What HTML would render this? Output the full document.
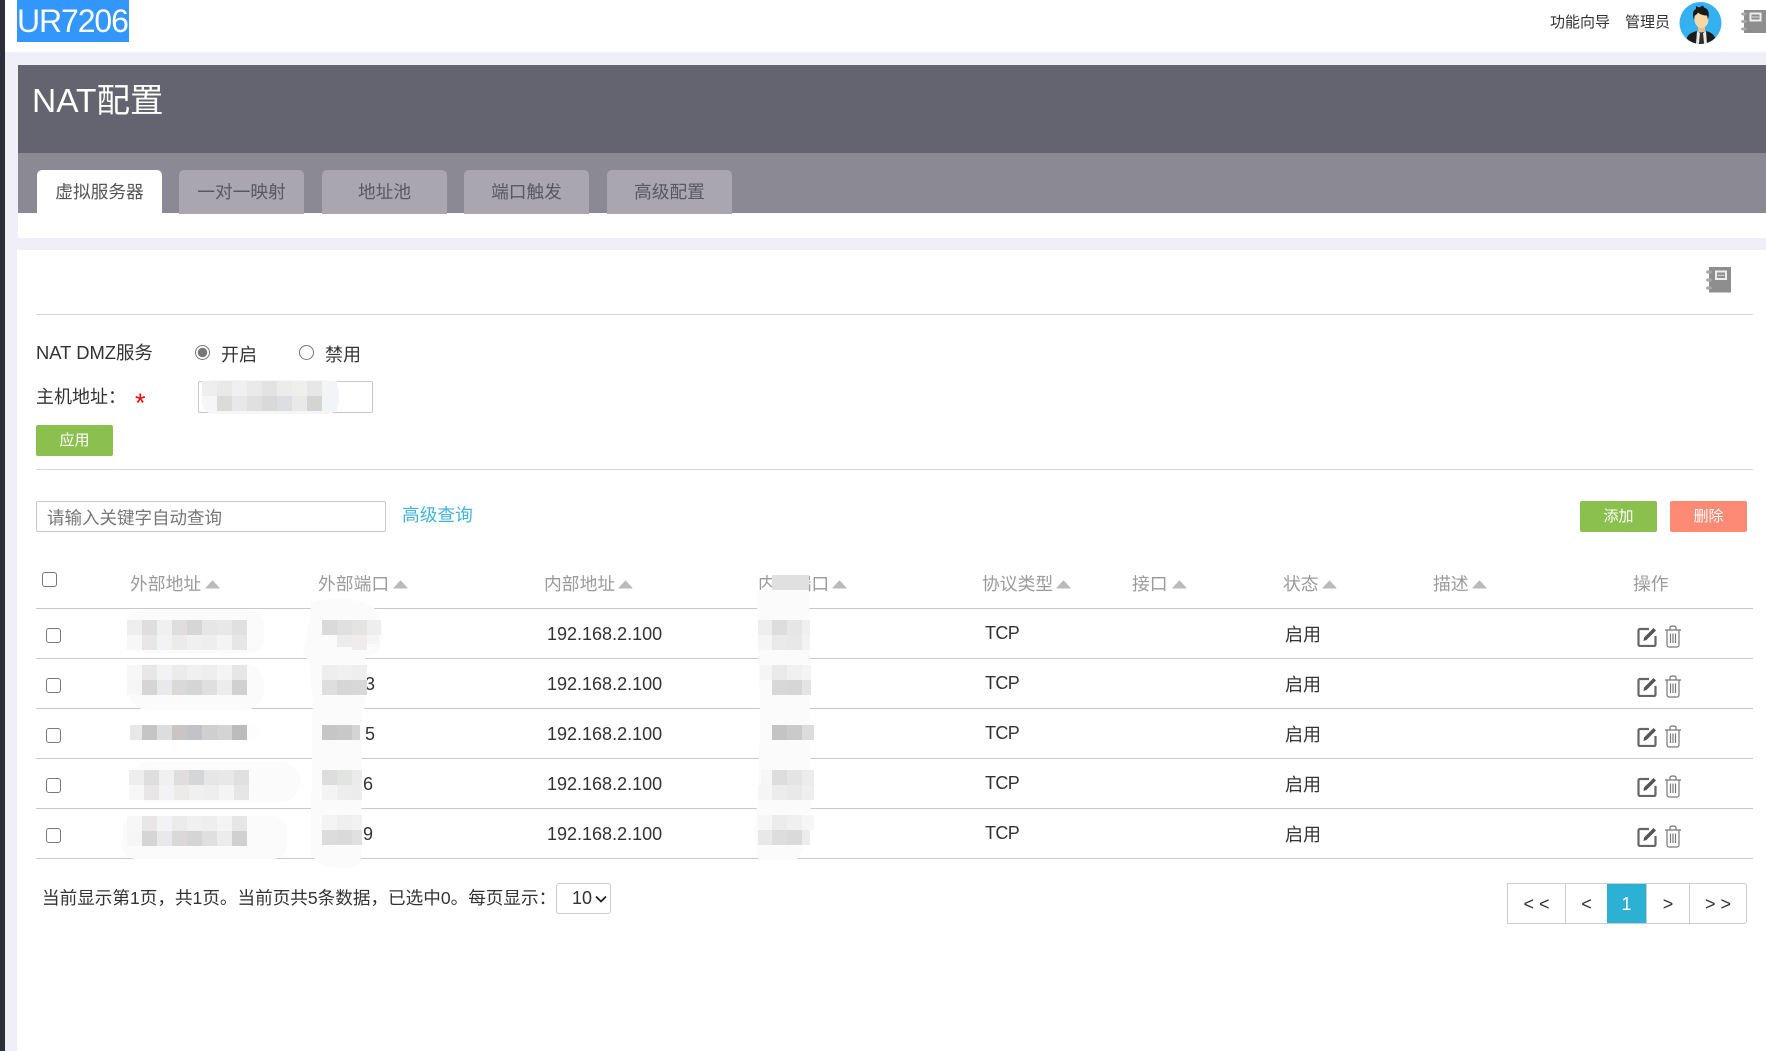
<!DOCTYPE html>
<html lang="zh-CN">
<head>
<meta charset="utf-8">
<title>NAT配置</title>
<style>
html,body{margin:0;padding:0;width:1766px;height:1051px;overflow:hidden;background:#eeeff7;}
body{position:relative;font-family:"Liberation Sans","Noto Sans CJK SC",sans-serif;color:#333;}
.a{position:absolute;}
.t{position:absolute;line-height:24px;height:24px;white-space:nowrap;font-size:18px;}
.line{position:absolute;left:36px;width:1717px;height:1px;background:#d8d8d8;}
.tab{position:absolute;top:170px;width:125px;height:44px;background:#a9a6af;border-radius:5px 5px 0 0;text-align:center;line-height:44px;font-size:17.700px;color:#585860;}
.btn{position:absolute;height:31px;width:77px;border-radius:2px;color:#fff;font-size:15px;line-height:32px;text-align:center;}
.green{background:#8bc04f;}
.red{background:#fd8a75;}
input.cb{position:absolute;appearance:none;-webkit-appearance:none;margin:0;width:15px;height:15px;border:1px solid #777;border-radius:3px;background:#fff;box-sizing:border-box;}
input.rd{position:absolute;appearance:none;-webkit-appearance:none;margin:0;width:15px;height:15px;border:1px solid #777;border-radius:50%;background:#fff;box-sizing:border-box;top:345px;}
input.rd:checked{background:radial-gradient(circle,#777 0,#777 4.4px,#fff 5px);}
.th{position:absolute;top:572px;line-height:24px;font-size:17.800px;color:#9b9b9b;white-space:nowrap;}
.ar{position:absolute;top:580px;width:15px;height:9px;}
.row{position:absolute;left:36px;width:1717px;height:49px;border-bottom:1px solid #c9c9c9;}
.row .t{top:13px;}
.row .tc{letter-spacing:-.6px;top:12px;}
.row .cb{left:10px;top:19px;}
.row .st{top:14px;}
.row svg{position:absolute;}
.pg{position:absolute;top:0;height:39px;line-height:40px;text-align:center;font-size:18px;color:#333;border-right:1px solid #ccc;box-sizing:content-box;}
</style>
</head>
<body>
<div class="a" style="left:0;top:0;width:5px;height:1051px;background:#2c2f39;"></div>

<!-- top bar -->
<div class="a" style="left:5px;top:0;width:1761px;height:52px;background:#fff;"></div>
<div class="a" style="left:17px;top:0;width:112px;height:42px;background:#3296fb;color:#fff;font-size:32px;line-height:42px;letter-spacing:-1.1px;white-space:nowrap;overflow:hidden;">UR7206</div>
<div class="t" style="left:1550px;top:11px;font-size:15px;color:#333;">功能向导</div>
<div class="t" style="left:1625px;top:11px;font-size:15px;color:#333;">管理员</div>
<svg class="a" style="left:1679px;top:2px;" width="43" height="42" viewBox="0 0 43 42">
  <defs><clipPath id="c"><circle cx="21.5" cy="21" r="21"/></clipPath></defs>
  <circle cx="21.5" cy="21" r="21" fill="#35b1f2"/>
  <g clip-path="url(#c)">
    <path d="M7 42c0-8 3-11 11-13l4 2 5-2c7 2 10 5 10 13z" fill="#1d1c1c"/>
    <path d="M18 29l-1 13h3l1-11zM27 29l1 13h-3l-1-11z" fill="#eee9dc"/>
    <path d="M21 31h3l-.5 11h-2z" fill="#333"/>
    <rect x="19" y="23" width="7" height="7" fill="#e7c08f"/>
    <ellipse cx="22.500" cy="17.500" rx="7" ry="8.500" fill="#f7d7a4"/>
    <path d="M15 18c-2-6-1-10 2-11l0-3 3 1.500 4-2 1 2c4 1 6 5 4 12l-1-4c-3 0-7-1-9-3-1 2-3 3-3.500 3z" fill="#1a1a1a"/>
  </g>
</svg>
<svg class="a" style="left:1741px;top:10px;" width="25" height="23" viewBox="0 0 25 23">
  <rect x="3" y="0" width="22" height="23" fill="#8e8e8e"/>
  <rect x="9.500" y="3.500" width="10" height="7" fill="#8e8e8e" stroke="#eee" stroke-width="2"/>
  <path d="M11 7h7" stroke="#ddd"/>
  <g fill="#a8a8a8"><ellipse cx="3" cy="4" rx="3" ry="1.600"/><ellipse cx="3" cy="11.500" rx="3" ry="1.600"/><ellipse cx="3" cy="19" rx="3" ry="1.600"/></g>
</svg>

<!-- title panel -->
<div class="a" style="left:18px;top:65px;width:1748px;height:88px;background:#63646f;"></div>
<div class="a" style="left:32px;top:82px;color:#fff;font-size:33.500px;line-height:40px;white-space:nowrap;">NAT配置</div>
<div class="a" style="left:18px;top:153px;width:1748px;height:60px;background:#8b8994;"></div>
<div class="a" style="left:18px;top:213px;width:1748px;height:25px;background:#fff;"></div>
<div class="tab" style="left:37px;background:#fff;height:43px;color:#555;">虚拟服务器</div>
<div class="tab" style="left:179px;">一对一映射</div>
<div class="tab" style="left:322px;">地址池</div>
<div class="tab" style="left:464px;">端口触发</div>
<div class="tab" style="left:607px;">高级配置</div>

<!-- main card -->
<div class="a" style="left:17px;top:250px;width:1749px;height:801px;background:#fff;"></div>
<svg class="a" style="left:1706px;top:267px;" width="25" height="26" viewBox="0 0 25 26">
  <rect x="3" y="0" width="22" height="25.500" fill="#8e8e8e"/>
  <rect x="10" y="4.500" width="10" height="7.500" fill="#8e8e8e" stroke="#eee" stroke-width="2"/>
  <path d="M11.500 8.300h7" stroke="#ddd"/>
  <g fill="#a8a8a8"><ellipse cx="3" cy="5" rx="3" ry="1.700"/><ellipse cx="3" cy="13" rx="3" ry="1.700"/><ellipse cx="3" cy="21" rx="3" ry="1.700"/></g>
</svg>
<div class="line" style="top:314px;"></div>

<div class="t" style="left:36px;top:341px;font-size:18.400px;">NAT DMZ服务</div>
<input class="rd" type="radio" name="d" checked style="left:195px;">
<div class="t" style="left:221px;top:343px;">开启</div>
<input class="rd" type="radio" name="d" style="left:299px;">
<div class="t" style="left:325px;top:343px;">禁用</div>
<div class="t" style="left:36px;top:385px;">主机地址：</div>
<div class="t" style="left:135px;top:391px;color:#f00;font-size:27px;">*</div>
<div class="a" style="left:198px;top:381px;width:173px;height:30px;border:1px solid #c8c8c8;border-radius:2px;background:#fff;"></div>
<div class="btn green" style="left:36px;top:425px;">应用</div>
<div class="line" style="top:469px;"></div>

<div class="a" style="left:36px;top:501px;width:348px;height:29px;border:1px solid #c8c8c8;border-radius:2px;background:#fff;"></div>
<div class="t" style="left:47px;top:506px;color:#777;font-size:17.500px;">请输入关键字自动查询</div>
<div class="t" style="left:402px;top:503px;color:#3fb5e0;font-size:17.700px;">高级查询</div>
<div class="btn green" style="left:1580px;top:501px;">添加</div>
<div class="btn red" style="left:1670px;top:501px;">删除</div>

<!-- table head -->
<input class="cb" type="checkbox" style="left:42px;top:572px;">
<div class="th" style="left:130px;">外部地址</div>
<div class="th" style="left:318px;">外部端口</div>
<div class="th" style="left:544px;">内部地址</div>
<div class="th" style="left:758px;">内部端口</div>
<div class="th" style="left:982px;">协议类型</div>
<div class="th" style="left:1132px;">接口</div>
<div class="th" style="left:1283px;">状态</div>
<div class="th" style="left:1433px;">描述</div>
<div class="th" style="left:1633px;">操作</div>
<svg class="ar" style="left:205px;" viewBox="0 0 15 9"><path d="M7.500 1L14 8H1z" fill="#bbb" stroke="#bbb" stroke-linejoin="round"/></svg>
<svg class="ar" style="left:393px;" viewBox="0 0 15 9"><path d="M7.500 1L14 8H1z" fill="#bbb" stroke="#bbb" stroke-linejoin="round"/></svg>
<svg class="ar" style="left:618px;" viewBox="0 0 15 9"><path d="M7.500 1L14 8H1z" fill="#bbb" stroke="#bbb" stroke-linejoin="round"/></svg>
<svg class="ar" style="left:832px;" viewBox="0 0 15 9"><path d="M7.500 1L14 8H1z" fill="#bbb" stroke="#bbb" stroke-linejoin="round"/></svg>
<svg class="ar" style="left:1056px;" viewBox="0 0 15 9"><path d="M7.500 1L14 8H1z" fill="#bbb" stroke="#bbb" stroke-linejoin="round"/></svg>
<svg class="ar" style="left:1172px;" viewBox="0 0 15 9"><path d="M7.500 1L14 8H1z" fill="#bbb" stroke="#bbb" stroke-linejoin="round"/></svg>
<svg class="ar" style="left:1322px;" viewBox="0 0 15 9"><path d="M7.500 1L14 8H1z" fill="#bbb" stroke="#bbb" stroke-linejoin="round"/></svg>
<svg class="ar" style="left:1472px;" viewBox="0 0 15 9"><path d="M7.500 1L14 8H1z" fill="#bbb" stroke="#bbb" stroke-linejoin="round"/></svg>
<div class="a" style="left:36px;top:608px;width:1717px;height:1px;background:#c9c9c9;"></div>

<!-- rows -->
<div class="row" style="top:609px;">
  <input class="cb" type="checkbox">
  <div class="t" style="left:511px;">192.168.2.100</div>
  <div class="t tc" style="left:949px;">TCP</div>
  <div class="t st" style="left:1249px;">启用</div>
  <svg style="left:1601px;top:17px;" width="21" height="21" viewBox="0 0 21 21"><path d="M12 3H3a1.500 1.500 0 0 0-1.500 1.500v14A1.500 1.500 0 0 0 3 20h14a1.500 1.500 0 0 0 1.500-1.500V10" fill="none" stroke="#666" stroke-width="2.200"/><path d="M7 11.500L16.500 2l2.500 2.500L9.500 14 6.500 15z" fill="#555"/></svg>
  <svg style="left:1628px;top:16px;" width="18" height="23" viewBox="0 0 18 23"><path d="M1 5h16M6 5V2.500C6 1.500 7 1 9 1s3 .5 3 1.500V5M3 5v15c0 1 1 2 2 2h8c1 0 2-1 2-2V5M6.500 8.500v9.500M9 8.500v9.500M11.500 8.500v9.500" fill="none" stroke="#777" stroke-width="1.200"/></svg>
</div>
<div class="row" style="top:659px;">
  <input class="cb" type="checkbox">
  <div class="t" style="left:329px;">3</div>
  <div class="t" style="left:511px;">192.168.2.100</div>
  <div class="t tc" style="left:949px;">TCP</div>
  <div class="t st" style="left:1249px;">启用</div>
  <svg style="left:1601px;top:17px;" width="21" height="21" viewBox="0 0 21 21"><path d="M12 3H3a1.500 1.500 0 0 0-1.500 1.500v14A1.500 1.500 0 0 0 3 20h14a1.500 1.500 0 0 0 1.500-1.500V10" fill="none" stroke="#666" stroke-width="2.200"/><path d="M7 11.500L16.500 2l2.500 2.500L9.500 14 6.500 15z" fill="#555"/></svg>
  <svg style="left:1628px;top:16px;" width="18" height="23" viewBox="0 0 18 23"><path d="M1 5h16M6 5V2.500C6 1.500 7 1 9 1s3 .5 3 1.500V5M3 5v15c0 1 1 2 2 2h8c1 0 2-1 2-2V5M6.500 8.500v9.500M9 8.500v9.500M11.500 8.500v9.500" fill="none" stroke="#777" stroke-width="1.200"/></svg>
</div>
<div class="row" style="top:709px;">
  <input class="cb" type="checkbox">
  <div class="t" style="left:329px;">5</div>
  <div class="t" style="left:511px;">192.168.2.100</div>
  <div class="t tc" style="left:949px;">TCP</div>
  <div class="t st" style="left:1249px;">启用</div>
  <svg style="left:1601px;top:17px;" width="21" height="21" viewBox="0 0 21 21"><path d="M12 3H3a1.500 1.500 0 0 0-1.500 1.500v14A1.500 1.500 0 0 0 3 20h14a1.500 1.500 0 0 0 1.500-1.500V10" fill="none" stroke="#666" stroke-width="2.200"/><path d="M7 11.500L16.500 2l2.500 2.500L9.500 14 6.500 15z" fill="#555"/></svg>
  <svg style="left:1628px;top:16px;" width="18" height="23" viewBox="0 0 18 23"><path d="M1 5h16M6 5V2.500C6 1.500 7 1 9 1s3 .5 3 1.500V5M3 5v15c0 1 1 2 2 2h8c1 0 2-1 2-2V5M6.500 8.500v9.500M9 8.500v9.500M11.500 8.500v9.500" fill="none" stroke="#777" stroke-width="1.200"/></svg>
</div>
<div class="row" style="top:759px;">
  <input class="cb" type="checkbox">
  <div class="t" style="left:327px;">6</div>
  <div class="t" style="left:511px;">192.168.2.100</div>
  <div class="t tc" style="left:949px;">TCP</div>
  <div class="t st" style="left:1249px;">启用</div>
  <svg style="left:1601px;top:17px;" width="21" height="21" viewBox="0 0 21 21"><path d="M12 3H3a1.500 1.500 0 0 0-1.500 1.500v14A1.500 1.500 0 0 0 3 20h14a1.500 1.500 0 0 0 1.500-1.500V10" fill="none" stroke="#666" stroke-width="2.200"/><path d="M7 11.500L16.500 2l2.500 2.500L9.500 14 6.500 15z" fill="#555"/></svg>
  <svg style="left:1628px;top:16px;" width="18" height="23" viewBox="0 0 18 23"><path d="M1 5h16M6 5V2.500C6 1.500 7 1 9 1s3 .5 3 1.500V5M3 5v15c0 1 1 2 2 2h8c1 0 2-1 2-2V5M6.500 8.500v9.500M9 8.500v9.500M11.500 8.500v9.500" fill="none" stroke="#777" stroke-width="1.200"/></svg>
</div>
<div class="row" style="top:809px;">
  <input class="cb" type="checkbox">
  <div class="t" style="left:327px;">9</div>
  <div class="t" style="left:511px;">192.168.2.100</div>
  <div class="t tc" style="left:949px;">TCP</div>
  <div class="t st" style="left:1249px;">启用</div>
  <svg style="left:1601px;top:17px;" width="21" height="21" viewBox="0 0 21 21"><path d="M12 3H3a1.500 1.500 0 0 0-1.500 1.500v14A1.500 1.500 0 0 0 3 20h14a1.500 1.500 0 0 0 1.500-1.500V10" fill="none" stroke="#666" stroke-width="2.200"/><path d="M7 11.500L16.500 2l2.500 2.500L9.500 14 6.500 15z" fill="#555"/></svg>
  <svg style="left:1628px;top:16px;" width="18" height="23" viewBox="0 0 18 23"><path d="M1 5h16M6 5V2.500C6 1.500 7 1 9 1s3 .5 3 1.500V5M3 5v15c0 1 1 2 2 2h8c1 0 2-1 2-2V5M6.500 8.500v9.500M9 8.500v9.500M11.500 8.500v9.500" fill="none" stroke="#777" stroke-width="1.200"/></svg>
</div>

<!-- redaction mosaics -->
<svg class="a" style="left:0;top:0;pointer-events:none;" width="1766" height="1051" viewBox="0 0 1766 1051" shape-rendering="crispEdges">
  <g shape-rendering="auto" fill="#fbfbfb">
    <rect x="127" y="610" width="137" height="43" rx="14"/>
    <rect x="128" y="664" width="136" height="46" rx="20" />
    <rect x="130" y="725" width="130" height="15" rx="6" fill="#fdfdfd"/>
    <rect x="130" y="762" width="170" height="40" rx="20"/>
    <rect x="122" y="816" width="165" height="43" rx="14"/>
    <path d="M312 603c10-6 56-8 66 10 6 10 5 26 1 36-4 6-10 6-14 8l0 50-3 6-1 150c-6 8-44 8-50-10v-60c2-30 0-60 2-90l-4-40-6-12c2-10 8-30 8-50z"/>
    <path d="M757 590h52l1 120 1 90c0 24-8 50-14 60h-38c-6-12-4-40-1-60l2-90-2-60z"/>
    <rect x="772" y="575" width="37" height="15" fill="#e0e0e0"/>
  </g>
  <!-- host input -->
  <rect x="202" y="380" width="137" height="34" rx="12" fill="#f5f6f8" shape-rendering="auto"/>
  <g>
    <rect x="202" y="381" width="15" height="15" fill="#eeeeee"/><rect x="217" y="381" width="15" height="15" fill="#e9e9e9"/><rect x="232" y="381" width="15" height="15" fill="#f0f0f0"/><rect x="247" y="381" width="15" height="15" fill="#eaeaea"/><rect x="262" y="381" width="15" height="15" fill="#e3e3e3"/><rect x="277" y="381" width="15" height="15" fill="#ececec"/><rect x="292" y="381" width="15" height="15" fill="#efefee"/><rect x="307" y="381" width="15" height="15" fill="#e7e7e7"/><rect x="322" y="381" width="15" height="15" fill="#f3f4f6"/>
    <rect x="217" y="396" width="15" height="15" fill="#dbdbd9"/><rect x="232" y="396" width="15" height="15" fill="#e6e8ea"/><rect x="247" y="396" width="15" height="15" fill="#e0e0e0"/><rect x="262" y="396" width="15" height="15" fill="#d8d9d8"/><rect x="277" y="396" width="15" height="15" fill="#dcdfe2"/><rect x="292" y="396" width="15" height="15" fill="#e9e9e9"/><rect x="307" y="396" width="15" height="15" fill="#d4d4d0"/><rect x="322" y="396" width="15" height="15" fill="#f2f5f8"/>
  </g>
  <defs>
    <g id="L"><rect width="15" height="15" x="0" fill="#eeeeee"/><rect width="15" height="15" x="15" fill="#dedede"/><rect width="15" height="15" x="30" fill="#f0f0f0"/><rect width="15" height="15" x="45" fill="#e0dedc"/><rect width="15" height="15" x="60" fill="#d4d6d8"/><rect width="15" height="15" x="75" fill="#e6e6e6"/><rect width="15" height="15" x="90" fill="#e8e8e8"/><rect width="15" height="15" x="105" fill="#e0e0e0"/></g>
    <g id="P"><rect width="15" height="15" x="0" fill="#f7f7f7"/><rect width="15" height="15" x="15" fill="#e8e6e6"/><rect width="15" height="15" x="30" fill="#f2f3f5"/><rect width="15" height="15" x="45" fill="#ecebea"/><rect width="15" height="15" x="60" fill="#f0f0f0"/><rect width="15" height="15" x="75" fill="#eeeeee"/><rect width="15" height="15" x="90" fill="#f4f4f4"/><rect width="15" height="15" x="105" fill="#e6e6e6"/></g>
    <g id="D"><rect width="15" height="15" x="0" fill="#f6f6f6"/><rect width="15" height="15" x="15" fill="#d6d5d5"/><rect width="15" height="15" x="30" fill="#e8e9ea"/><rect width="15" height="15" x="45" fill="#dbd9d7"/><rect width="15" height="15" x="60" fill="#d4d5d7"/><rect width="15" height="15" x="75" fill="#dfdfdf"/><rect width="15" height="15" x="90" fill="#ececec"/><rect width="15" height="15" x="105" fill="#d0d0d0"/></g>
    <g id="E"><rect width="15" height="15" x="3" fill="#e8e8e8"/><rect width="15" height="15" x="15" fill="#c6c5c5"/><rect width="15" height="15" x="30" fill="#dcdddf"/><rect width="15" height="15" x="45" fill="#c8c5c3"/><rect width="15" height="15" x="60" fill="#c2c3c7"/><rect width="15" height="15" x="75" fill="#cfcfcf"/><rect width="15" height="15" x="90" fill="#d4d4d4"/><rect width="15" height="15" x="105" fill="#bcbcbc"/></g>
    <g id="c2"><rect width="15" height="15" x="0" fill="#eeeeee"/><rect width="15" height="15" x="15" fill="#f0f0f0"/><rect width="15" height="15" x="30" fill="#eeeeee"/></g>
    <g id="c3"><rect width="15" height="15" x="0" fill="#dededc"/><rect width="15" height="15" x="15" fill="#d6d6d6"/><rect width="15" height="15" x="30" fill="#d8d8d8"/></g>
  </defs>
  <use href="#L" x="127" y="620"/><use href="#P" x="127" y="635"/>
  <use href="#P" x="127" y="665"/><use href="#D" x="127" y="680"/>
  <use href="#E" x="127" y="725"/>
  <use href="#L" x="129" y="770"/><use href="#P" x="129" y="785"/>
  <use href="#P" x="127" y="816"/><use href="#D" x="127" y="831"/>

  <rect x="322" y="620" width="15" height="15" fill="#dadada"/><rect x="337" y="620" width="15" height="15" fill="#dfe0e0"/><rect x="352" y="620" width="15" height="15" fill="#e4e4e2"/><rect x="367" y="620" width="14" height="15" fill="#eeeeee"/>
  <rect x="337" y="635" width="15" height="12" fill="#ececec"/><rect x="352" y="635" width="15" height="15" fill="#eeedeb"/><rect x="367" y="635" width="12" height="9" fill="#f4f5f7"/>
  <use href="#c2" x="322" y="665"/><use href="#c3" x="322" y="680"/>
  <rect x="322" y="725" width="15" height="15" fill="#c6c6c6"/><rect x="337" y="725" width="15" height="15" fill="#c8c8c8"/><rect x="352" y="725" width="8" height="15" fill="#d4d4d4"/>
  <rect x="322" y="770" width="15" height="15" fill="#dddddd"/><rect x="337" y="770" width="15" height="15" fill="#e2e4e2"/><rect x="352" y="770" width="10" height="15" fill="#ebebeb"/>
  <rect x="322" y="785" width="15" height="15" fill="#f4f4f4"/><rect x="337" y="785" width="15" height="15" fill="#ededed"/><rect x="352" y="785" width="10" height="15" fill="#ececec"/>
  <rect x="322" y="815" width="15" height="15" fill="#f4f4f4"/><rect x="337" y="815" width="15" height="15" fill="#efefef"/><rect x="352" y="815" width="10" height="15" fill="#f2f2f2"/>
  <rect x="322" y="830" width="15" height="15" fill="#dcdcdc"/><rect x="337" y="830" width="15" height="15" fill="#dadada"/><rect x="352" y="830" width="10" height="15" fill="#e0e0e0"/>

  <rect x="758" y="620" width="14" height="15" fill="#eeeeee"/><rect x="772" y="620" width="15" height="15" fill="#dddddd"/><rect x="787" y="620" width="15" height="15" fill="#e6e6e6"/><rect x="802" y="620" width="8" height="15" fill="#f0f0f0"/>
  <rect x="758" y="635" width="14" height="15" fill="#f5f5f5"/><rect x="772" y="635" width="15" height="15" fill="#eaeaea"/><rect x="787" y="635" width="15" height="15" fill="#e8e8e8"/><rect x="802" y="635" width="8" height="15" fill="#f3f3f3"/>
  <rect x="760" y="665" width="12" height="15" fill="#f5f5f5"/><rect x="772" y="665" width="15" height="15" fill="#eaeaea"/><rect x="787" y="665" width="15" height="15" fill="#f0f0f0"/><rect x="802" y="665" width="9" height="15" fill="#f4f4f4"/>
  <rect x="772" y="680" width="15" height="15" fill="#d8d8d8"/><rect x="787" y="680" width="15" height="15" fill="#d6d6d6"/><rect x="802" y="680" width="9" height="15" fill="#e4e4e4"/>
  <rect x="772" y="725" width="15" height="15" fill="#c4c4c4"/><rect x="787" y="725" width="15" height="15" fill="#cacaca"/><rect x="802" y="725" width="12" height="15" fill="#dcdcdc"/>
  <rect x="761" y="770" width="11" height="15" fill="#f6f6f6"/><rect x="772" y="770" width="15" height="15" fill="#dddddd"/><rect x="787" y="770" width="15" height="15" fill="#e4e4e4"/><rect x="802" y="770" width="12" height="15" fill="#ececec"/>
  <rect x="758" y="785" width="14" height="15" fill="#f5f5f5"/><rect x="772" y="785" width="15" height="15" fill="#ececec"/><rect x="787" y="785" width="15" height="15" fill="#e9e9e9"/><rect x="802" y="785" width="12" height="15" fill="#efefef"/>
  <rect x="758" y="815" width="14" height="15" fill="#f6f6f6"/><rect x="772" y="815" width="15" height="15" fill="#ececec"/><rect x="787" y="815" width="15" height="15" fill="#f0f0f0"/><rect x="802" y="815" width="12" height="15" fill="#f6f6f6"/>
  <rect x="758" y="830" width="14" height="15" fill="#e8e8e8"/><rect x="772" y="830" width="15" height="15" fill="#dddddd"/><rect x="787" y="830" width="15" height="15" fill="#dadada"/><rect x="802" y="830" width="8" height="15" fill="#ececec"/>
</svg>

<!-- footer -->
<div class="t" style="left:42px;top:886px;font-size:17.600px;">当前显示第1页，共1页。当前页共5条数据，已选中0。每页显示：</div>
<div class="a" style="left:556px;top:883px;width:53px;height:29px;border:1px solid #ccc;border-radius:3px;background:#fff;font-size:18px;line-height:29px;">
  <span style="position:absolute;left:15px;top:0;">10</span>
  <svg class="a" style="left:38px;top:11px;" width="12" height="8" viewBox="0 0 12 8"><path d="M1 1.500l5 5 5-5" fill="none" stroke="#222" stroke-width="1.800"/></svg>
</div>
<div class="a" style="left:1507px;top:883px;width:240px;height:41px;box-sizing:border-box;border:1px solid #ccc;border-right:1px solid #ccc;border-radius:0 3px 3px 0;background:#fff;">
  <div class="pg" style="left:0;width:57px;">&lt;&nbsp;&lt;</div>
  <div class="pg" style="left:58px;width:41px;border-right:0;">&lt;</div>
  <div class="pg" style="left:99px;width:39px;background:#2cb0d3;color:#fff;border-right:1px solid #ccc;">1</div>
  <div class="pg" style="left:139px;width:42px;">&gt;</div>
  <div class="pg" style="left:182px;width:56px;border-right:0;">&gt;&nbsp;&gt;</div>
</div>
</body>
</html>
